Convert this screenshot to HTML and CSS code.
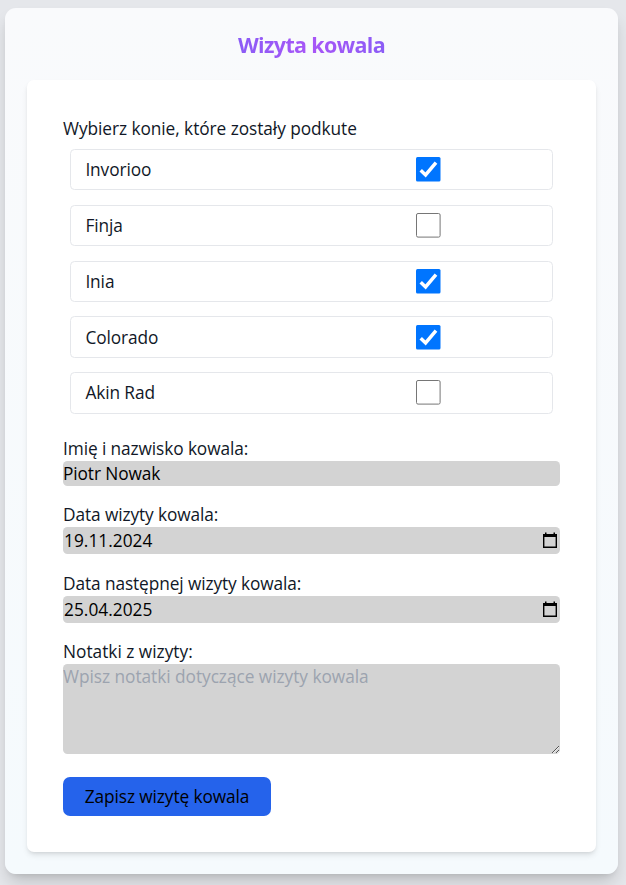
FILE: index.html
```html
<!DOCTYPE html>
<html lang="pl">
<head>
<meta charset="utf-8">
<title>Wizyta kowala</title>
<link rel="stylesheet" href="styles.css">
</head>
<body>
<main class="panel">
  <h1 class="title"><span>Wizyta kowala</span></h1>
  <form class="card">
    <p class="label lead">Wybierz konie, które zostały podkute</p>
    <ul class="horses">
      <li class="horse"><span class="name">Invorioo</span><svg class="check on" viewBox="0 0 25 25"><rect width="24.5" height="24.5" rx="1.5"/><path d="M4.7 13.3 9.6 18 20 5.7"/></svg></li>
      <li class="horse"><span class="name">Finja</span><svg class="check" viewBox="0 0 25 25"><rect x=".5" y=".5" width="23.6" height="23.6" rx="1.5"/></svg></li>
      <li class="horse"><span class="name">Inia</span><svg class="check on" viewBox="0 0 25 25"><rect width="24.5" height="24.5" rx="1.5"/><path d="M4.7 13.3 9.6 18 20 5.7"/></svg></li>
      <li class="horse"><span class="name">Colorado</span><svg class="check on" viewBox="0 0 25 25"><rect width="24.5" height="24.5" rx="1.5"/><path d="M4.7 13.3 9.6 18 20 5.7"/></svg></li>
      <li class="horse"><span class="name">Akin Rad</span><svg class="check" viewBox="0 0 25 25"><rect x=".5" y=".5" width="23.6" height="23.6" rx="1.5"/></svg></li>
    </ul>
    <div class="label smith">Imię i nazwisko kowala:</div>
    <div class="field text">Piotr Nowak</div>
    <div class="label visit">Data wizyty kowala:</div>
    <div class="field date"><span>19.11.2024</span><svg class="cal" viewBox="0 0 16 17"><path d="M1.7 2.7h12.6v12.6H1.7z"/><path class="solid" d="M1 2h14v3H1zM3 .4h1.5V3H3zM11.5 .4H13V3h-1.5z"/></svg></div>
    <div class="label next">Data następnej wizyty kowala:</div>
    <div class="field date"><span>25.04.2025</span><svg class="cal" viewBox="0 0 16 17"><path d="M1.7 2.7h12.6v12.6H1.7z"/><path class="solid" d="M1 2h14v3H1zM3 .4h1.5V3H3zM11.5 .4H13V3h-1.5z"/></svg></div>
    <div class="label notes-label">Notatki z wizyty:</div>
    <textarea class="field notes" placeholder="Wpisz notatki dotyczące wizyty kowala"></textarea>
    <button class="save" type="button">Zapisz wizytę kowala</button>
  </form>
</main>
</body>
</html>
```
FILE: styles.css
```css
* { box-sizing: border-box; margin: 0; padding: 0; }
body {
  height: 885px;
  overflow: hidden;
  padding: 8px 8px 0 5px;
  background: #e5e7eb;
  color: #111827;
  font: 17.3px/25px "Segoe UI", "Open Sans", "Noto Sans", sans-serif;
  letter-spacing: -.1px;
}
.panel {
  height: 866px;
  padding: 22px 22px 0;
  border-radius: 11px;
  background: linear-gradient(#f9fafb, #f5fafd);
  background: linear-gradient(#f9fafc, #f5fafd);
  box-shadow: 0 11px 17px -3px rgba(0,0,0,.16), 0 4px 7px -4px rgba(0,0,0,.14);
}
.title {
  height: 50px;
  font-size: 21.5px;
  line-height: 30px;
  font-weight: 700;
  text-align: center;
  letter-spacing: -.65px;
}
.title span {
  color: transparent;
  background: linear-gradient(90deg, #8b5cf6, #a855f7 50%, #8b5cf6);
  -webkit-background-clip: text;
  background-clip: text;
}
.card {
  height: 772px;
  padding: 36px;
  border-radius: 7px;
  background: #fff;
  box-shadow: 0 4px 6px -1px rgba(0,0,0,.1), 0 2px 4px -2px rgba(0,0,0,.12);
}
.label { height: 25px; white-space: nowrap; }
.lead { letter-spacing: -.06px; }
.horses {
  display: grid;
  gap: 14.4px;
  padding: 8px 7px 0;
  list-style: none;
}
.horse {
  display: grid;
  grid-template-columns: 331px 25px;
  height: 41.4px;
  padding: 0 14.4px;
  border: 1px solid #e5e7eb;
  border-radius: 4.5px;
  align-items: center;
}
.check { width: 25px; height: 25px; }
.check rect { fill: #fff; stroke: #767676; stroke-width: 1; }
.check.on rect { fill: #0075ff; stroke: none; }
.check path { fill: none; stroke: #fff; stroke-width: 3.5; }
.smith { margin-top: 22px; }
.visit { margin-top: 16px; }
.next { margin-top: 17px; }
.notes-label { margin-top: 16px; letter-spacing: 0; }
.field { width: 497px; border-radius: 4.5px; background: #d3d3d3; color: #000; }
.text { height: 25px; }
.date {
  display: flex;
  justify-content: space-between;
  align-items: center;
  height: 27px;
  padding: 0 2px 0 1px;
  letter-spacing: .03px;
}
.cal { width: 16px; height: 17px; }
.cal path { fill: none; stroke: #000; stroke-width: 1.4; }
.cal .solid { fill: #000; stroke: none; }
.notes {
  display: block;
  height: 90px;
  border: 0;
  outline: 0;
  font: inherit;
  letter-spacing: -.04px;
  resize: vertical;
}
.notes::placeholder { color: #9ca3af; }
.save {
  display: block;
  width: 208px;
  height: 39px;
  margin-top: 23px;
  border: 0;
  border-radius: 7px;
  background: #2563eb;
  color: #000;
  font: inherit;
  letter-spacing: inherit;
}
```
